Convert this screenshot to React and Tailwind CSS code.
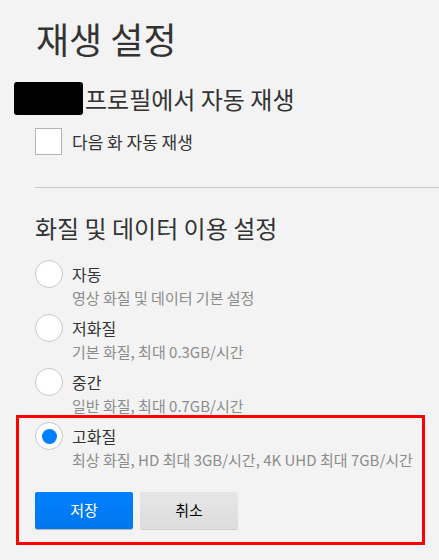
import React from 'react';

const options = [
    { id: 'auto', label: '자동', desc: '영상 화질 및 데이터 기본 설정' },
    { id: 'low', label: '저화질', desc: '기본 화질, 최대 0.3GB/시간' },
    { id: 'medium', label: '중간', desc: '일반 화질, 최대 0.7GB/시간' },
];

function Radio({ checked }) {
    return (
        <span className="flex h-[28px] w-[28px] shrink-0 items-center justify-center rounded-full border border-[#c8c8c8] bg-white">
            {checked && <span className="h-[15px] w-[15px] rounded-full bg-[#0080ff]" />}
        </span>
    );
}

function Option({ label, desc, checked }) {
    return (
        <div className="flex items-start gap-[9px]">
            <Radio checked={checked} />
            <div>
                <div className="text-[16px] leading-[28px] text-[#333333]">{label}</div>
                <div className="text-[15px] leading-[20px] text-[#8c8c8c]">{desc}</div>
            </div>
        </div>
    );
}

export default function App() {
    return (
        <div
            className="min-h-screen w-full bg-[#f3f3f3] pt-[16px] pl-[35px] pb-[14px]"
            style={{ fontFamily: '"Noto Sans CJK KR", "Noto Sans", sans-serif' }}
        >
            <h1 className="ml-[1px] text-[36px] leading-[44px] font-normal text-[#333333]">재생 설정</h1>

            {/* 프로필 이름은 가려져 있음 */}
            <div className="-ml-[21px] mt-[22px] flex h-[33px] items-center">
                <span className="h-[33px] w-[69px] rounded-[3px] bg-black" />
                <span className="ml-[2px] text-[24px] text-[#333333]">프로필에서 자동 재생</span>
            </div>

            <div className="mt-[13px] flex items-center gap-[10px]">
                <span className="h-[27px] w-[27px] border border-[#b3b3b3] bg-white" />
                <span className="text-[17px] text-[#333333]">다음 화 자동 재생</span>
            </div>

            <div className="mt-[32px] h-px bg-[#cccccc]" />

            <h2 className="mt-[24px] text-[24px] leading-[32px] font-normal text-[#333333]">화질 및 데이터 이용 설정</h2>

            <div className="mt-[16px] flex flex-col gap-[6px]">
                {options.map((o) => (
                    <Option key={o.id} label={o.label} desc={o.desc} />
                ))}
            </div>

            <div className="-ml-[19px] mr-[14px] mt-[-1px] border-[3px] border-[#ff0000] pl-[16px] pt-[4px] pb-[13px]">
                <Option label="고화질" desc="최상 화질, HD 최대 3GB/시간, 4K UHD 최대 7GB/시간" checked />
                <div className="mt-[22px] flex gap-[7px]">
                    <button className="h-[37px] w-[98px] rounded-[2px] bg-gradient-to-b from-[#0080ff] to-[#0277ec] text-[15px] text-white shadow-[0_1px_0_rgba(0,0,0,0.25)]">저장</button>
                    <button className="h-[37px] w-[98px] rounded-[2px] bg-gradient-to-b from-[#e6e6e6] to-[#dddddd] text-[15px] text-black shadow-[0_1px_0_rgba(0,0,0,0.15)]">취소</button>
                </div>
            </div>
        </div>
    );
}
